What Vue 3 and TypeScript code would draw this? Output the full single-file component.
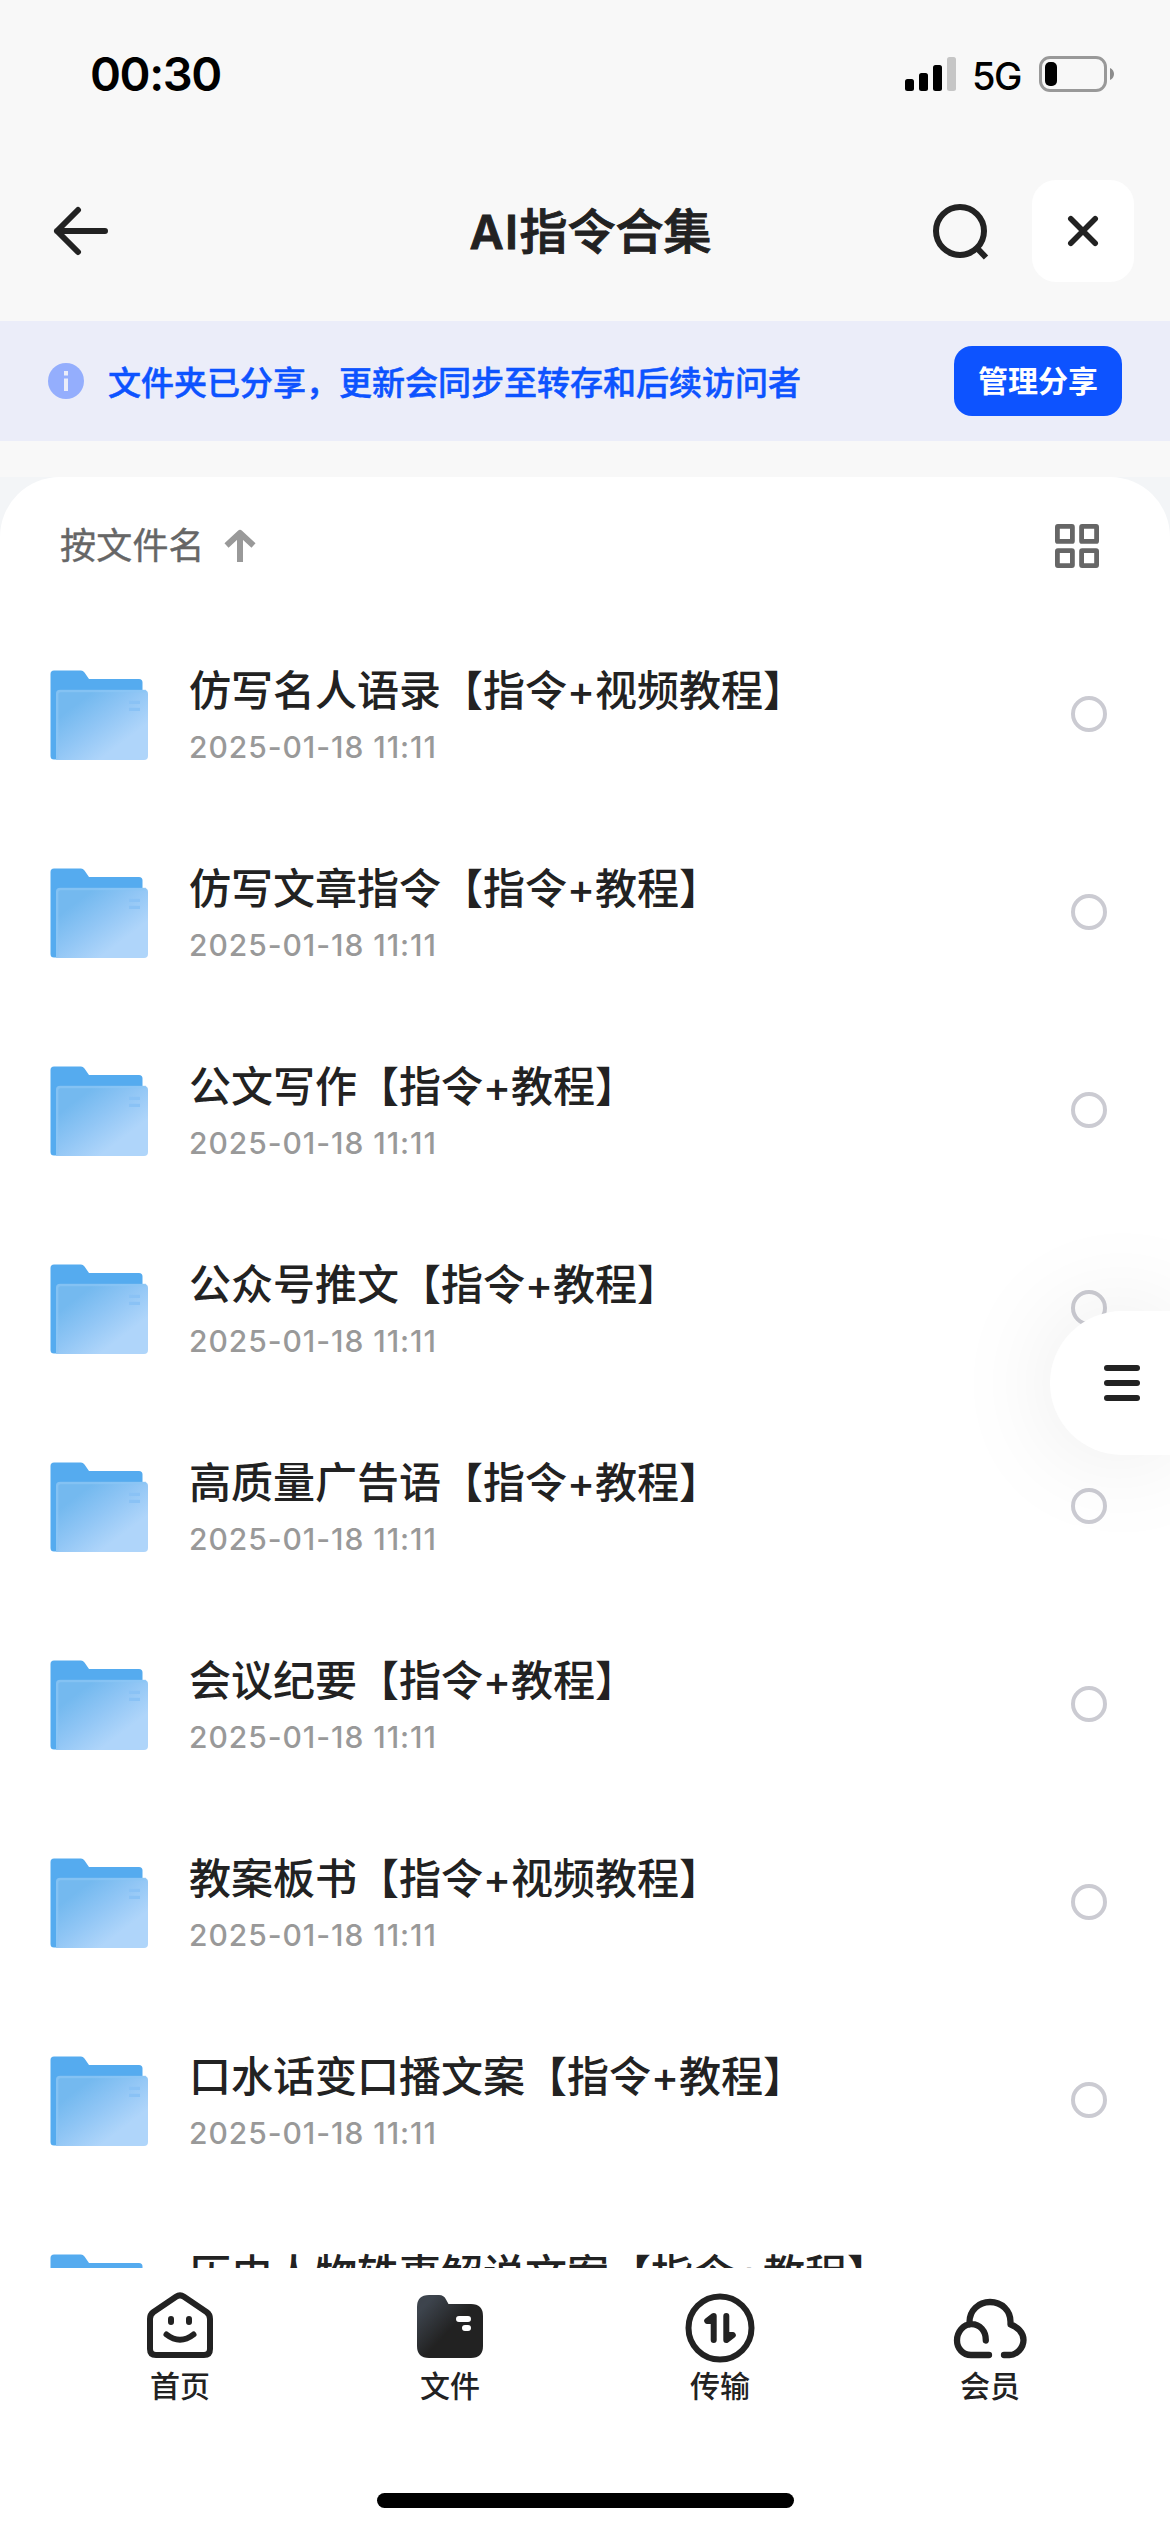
<script setup lang="ts">
interface FolderItem {
  name: string
  time: string
}

const time = '2025-01-18 11:11'
const folders: FolderItem[] = [
  '仿写名人语录【指令+视频教程】',
  '仿写文章指令【指令+教程】',
  '公文写作【指令+教程】',
  '公众号推文【指令+教程】',
  '高质量广告语【指令+教程】',
  '会议纪要【指令+教程】',
  '教案板书【指令+视频教程】',
  '口水话变口播文案【指令+教程】',
  '历史人物轶事解说文案【指令+教程】',
].map((name) => ({ name, time }))
</script>

<template>
  <div class="screen" lang="zh-CN">
    <header class="status">
      <span class="clock">00:30</span>
      <div class="status-right">
        <svg class="signal" width="51" height="34" viewBox="0 0 51 34">
          <rect x="0" y="22" width="9" height="12" rx="2.5" />
          <rect x="14" y="16" width="9" height="18" rx="2.5" />
          <rect x="28" y="8" width="9" height="26" rx="2.5" />
          <rect x="42" y="0" width="9" height="34" rx="2.5" fill="#c6c6c6" />
        </svg>
        <span class="network">5G</span>
        <svg class="battery" width="76" height="36" viewBox="0 0 76 36">
          <rect x="1.5" y="1.5" width="65" height="33" rx="9.5" fill="none" stroke="#999" stroke-width="3" />
          <rect x="6" y="6" width="12" height="24" rx="5" />
          <path d="M71 12c2.700 1 4 3.500 4 6s-1.300 5-4 6z" fill="#8c8c8c" />
        </svg>
      </div>
    </header>

    <nav class="titlebar">
      <svg class="back" width="60" height="54" viewBox="0 0 60 54" fill="none" stroke="#222" stroke-width="6" stroke-linecap="round" stroke-linejoin="round">
        <path d="M54 27H6M27 6 6 27l21 21" />
      </svg>
      <h1><span class="latin">AI</span>指令合集</h1>
      <div class="actions">
        <svg class="search" width="60" height="60" viewBox="0 0 60 60" fill="none" stroke="#222" stroke-width="6">
          <circle cx="30" cy="30" r="24" />
          <path d="m46 46 10 10.500" />
        </svg>
        <button class="close">
          <svg width="34" height="34" viewBox="0 0 34 34" stroke="#222" stroke-width="5.600" stroke-linecap="round">
            <path d="m4.800 4.800 24.400 24.400M29.200 4.800 4.800 29.200" />
          </svg>
        </button>
      </div>
    </nav>

    <section class="banner">
      <svg width="36" height="36" viewBox="0 0 36 36">
        <circle cx="18" cy="18" r="18" fill="#94aefd" />
        <path d="M16 8h4v4.500h-4zM16 15.500h4v12.500h-4z" fill="#ebedf9" />
      </svg>
      <p>文件夹已分享，更新会同步至转存和后续访问者</p>
      <button class="manage">管理分享</button>
    </section>

    <main class="backdrop">
      <div class="sheet">
        <div class="toolbar">
          <span class="sort">按文件名</span>
          <svg class="asc" width="32" height="34" viewBox="0 0 32 34" fill="none" stroke="#999" stroke-width="6" stroke-linejoin="round">
            <path d="M16 33V5M2.500 16.500 16 4l13.500 12.500" />
          </svg>
          <svg class="grid" width="44" height="44" viewBox="0 0 44 44" fill="none" stroke="#666" stroke-width="4.800">
            <rect x="2.400" y="2.400" width="15" height="15" rx=".5" />
            <rect x="26.600" y="2.400" width="15" height="15" rx=".5" />
            <rect x="2.400" y="26.600" width="15" height="15" rx=".5" />
            <rect x="26.600" y="26.600" width="15" height="15" rx=".5" />
          </svg>
        </div>

        <ul class="list">
          <li v-for="(f, i) in folders" :key="i" class="row">
            <svg class="folder" width="98" height="90" viewBox="0 0 98 90">
              <defs>
                <linearGradient :id="`front${i}`" x1=".1" y1=".1" x2=".85" y2=".85">
                  <stop offset="0.150" stop-color="#74b9ef" />
                  <stop offset=".5" stop-color="#91c6f5" />
                  <stop offset=".85" stop-color="#afd5fa" />
                </linearGradient>
              </defs>
              <path d="M4 .5H31q2 0 3.500 2L39 9H89q3.500 0 3.500 3.500V40L10 89.500H4q-3.500 0-3.500-3.500V4Q.5.500 4 .5z" fill="#55abef" />
              <path d="M10 20H94q4 0 4 4V86q0 4-4 4H6V24q0-4 4-4z" :fill="`url(#front${i})`" />
              <path d="M7.200 89V24q0-3 3-3H96" fill="none" stroke="#8cc6f5" stroke-width="2.400" opacity=".7" />
              <path d="M79 32.300H90M79 39.300H90" stroke="#8ac2f5" stroke-width="3.200" />
            </svg>
            <div class="info">
              <div class="name">{{ f.name }}</div>
              <div class="date">{{ f.time }}</div>
            </div>
            <span class="radio"></span>
          </li>
        </ul>
      </div>
    </main>

    <footer class="tabs">
      <div class="tab-row">
        <div class="tab">
          <svg width="72" height="72" viewBox="0 0 72 72" fill="none" stroke="#222" stroke-width="6" stroke-linecap="round" stroke-linejoin="round">
            <path d="M32 5.700q4-2.700 8 0L62.500 21Q66 23.500 66 28V58q0 6-6 6H12q-6 0-6-6V28q0-4.500 3.500-7z" />
            <path d="M27 28v3M45 28v3" />
            <path d="M22.500 43.500Q36 54 49.500 43.500" />
          </svg>
          <span>首页</span>
        </div>
        <div class="tab">
          <svg width="72" height="72" viewBox="0 0 72 72">
            <defs>
              <linearGradient id="tabFolder" x1="0" y1=".1" x2=".5" y2=".55">
                <stop offset=".2" stop-color="#3d444d" />
                <stop offset="1" stop-color="#222" />
              </linearGradient>
            </defs>
            <path d="M3 16Q3 4 15 4h10q5 0 7 4.500l2.500 4.500H57q12 0 12 12v30q0 12-12 12H15Q3 67 3 55z" fill="url(#tabFolder)" />
            <path d="M45 28h9M51 37h3" stroke="#fff" stroke-width="6" stroke-linecap="round" />
          </svg>
          <span>文件</span>
        </div>
        <div class="tab">
          <svg width="72" height="72" viewBox="0 0 72 72" fill="none" stroke="#222" stroke-width="6" stroke-linecap="round" stroke-linejoin="round">
            <circle cx="36" cy="37" r="31.500" />
            <path fill="#222" d="M29.700 49V25l-6.500 5h6.500zM42.300 25v24l6.500-5h-6.500z" />
          </svg>
          <span>传输</span>
        </div>
        <div class="tab">
          <svg width="78" height="72" viewBox="0 0 78 72" fill="none" stroke="#222" stroke-width="6.300" stroke-linecap="round" stroke-linejoin="round">
            <path d="M18.500 33.500V31C18.500 19.500 27.500 11 39 11s21 8.500 20.500 21v1.500C66 35.500 72.500 41.500 72.500 49S66 64 58.500 64H53M38 64H20C12 64 6 57.500 6 49.500S12 33.200 20.500 33.200 35 40 34.800 49.500" />
          </svg>
          <span>会员</span>
        </div>
      </div>
      <div class="home-indicator"></div>
    </footer>

    <button class="fab">
      <i></i>
      <i></i>
      <i></i>
    </button>
  </div>
</template>

<style>
body {
  margin: 0;
}
</style>

<style scoped>
.screen {
  position: relative;
  display: flex;
  flex-direction: column;
  width: 1170px;
  height: 2532px;
  overflow: hidden;
  background: #f8f8f8;
  color: #222;
  font-family: Inter, "Noto Sans CJK SC", sans-serif;
}
svg {
  display: block;
  flex: none;
}
button {
  border: 0;
  padding: 0;
  font-family: inherit;
}
.status {
  display: flex;
  align-items: center;
  justify-content: space-between;
  height: 148px;
  padding: 0 55px 0 90px;
  flex: none;
  box-sizing: border-box;
  color: #000;
}
.clock {
  font-size: 47px;
  font-weight: 600;
  line-height: 60px;
  letter-spacing: -1.4px;
}
.status-right {
  display: flex;
  align-items: center;
}
.network {
  margin: 4px 16px 0 16px;
  font-size: 38px;
  font-weight: 500;
  line-height: 44px;
  width: 51px;
  letter-spacing: -1.5px;
}
.titlebar {
  display: grid;
  grid-template-columns: 1fr auto 1fr;
  align-items: center;
  height: 173px;
  padding: 0 36px 7px 51px;
  box-sizing: border-box;
  flex: none;
}
h1 {
  margin: 2px 4px 0 0;
  font-size: 48px;
  line-height: 60px;
  font-weight: 500;
  -webkit-text-stroke: 0.9px #222;
}
.latin {
  font-size: 47px;
  font-weight: 600;
  letter-spacing: 1.5px;
}
.actions {
  display: flex;
  align-items: center;
  justify-content: flex-end;
  gap: 42px;
}
.close {
  display: grid;
  place-items: center;
  width: 102px;
  height: 102px;
  border-radius: 24px;
  background: #fff;
}
.banner {
  display: flex;
  align-items: center;
  height: 120px;
  padding: 0 48px;
  box-sizing: border-box;
  flex: none;
  background: #ebedf9;
  color: #0d53ff;
}
.banner p {
  margin: 3px auto 0 24px;
  font-size: 33px;
  font-weight: 500;
  line-height: 48px;
  -webkit-text-stroke: 0.5px #0d53ff;
}
.manage {
  width: 168px;
  height: 70px;
  border-radius: 18px;
  background: #0d53ff;
  color: #fff;
  font-size: 30px;
  font-weight: 700;
  line-height: 70px;
}
.backdrop {
  display: flex;
  flex: 1;
  min-height: 0;
  margin-top: 36px;
  background: #f3f5f7;
}
.sheet {
  flex: 1;
  overflow: hidden;
  border-radius: 60px 60px 0 0;
  background: #fff;
}
.toolbar {
  display: flex;
  align-items: center;
  height: 138px;
  padding: 0 71px 0 60px;
}
.sort {
  color: #666;
  font-size: 36px;
  line-height: 54px;
  letter-spacing: 0.2px;
  -webkit-text-stroke: 0.4px #666;
}
.asc {
  margin-left: 19px;
}
.grid {
  margin-left: auto;
}
.list {
  margin: 0;
  padding: 0;
  list-style: none;
}
.row {
  display: flex;
  align-items: center;
  height: 198px;
  padding: 0 63px 0 50px;
}
.folder {
  margin-top: 2px;
}
.info {
  margin-left: 41px;
}
.name {
  margin-top: -1px;
  font-size: 42px;
  font-weight: 500;
  line-height: 60px;
}
.date {
  margin-top: 6px;
  color: #999;
  font-size: 30px;
  font-weight: 500;
  line-height: 40px;
  letter-spacing: 0.95px;
}
.radio {
  width: 36px;
  height: 36px;
  margin-left: auto;
  border: 4px solid #cbcbd2;
  border-radius: 50%;
  box-sizing: border-box;
}
.tabs {
  display: flex;
  flex-direction: column;
  align-items: center;
  justify-content: space-between;
  height: 264px;
  padding-bottom: 24px;
  box-sizing: border-box;
  flex: none;
  background: #fff;
}
.tab-row {
  display: flex;
  padding-top: 23px;
}
.tab {
  display: flex;
  flex-direction: column;
  align-items: center;
  width: 270px;
  font-size: 30px;
  font-weight: 500;
  line-height: 46px;
}
.home-indicator {
  width: 417px;
  height: 15px;
  border-radius: 8px;
  background: #000;
}
.fab {
  position: absolute;
  top: 1311px;
  right: 0;
  display: flex;
  flex-direction: column;
  align-items: flex-start;
  justify-content: center;
  gap: 9px;
  width: 120px;
  height: 144px;
  padding-left: 54px;
  border-radius: 72px 0 0 72px;
  background: #fff;
  box-shadow: 0 0 110px rgba(0, 0, 0, 0.09);
}
.fab i {
  width: 36px;
  height: 6px;
  border-radius: 3px;
  background: #222;
}
</style>
